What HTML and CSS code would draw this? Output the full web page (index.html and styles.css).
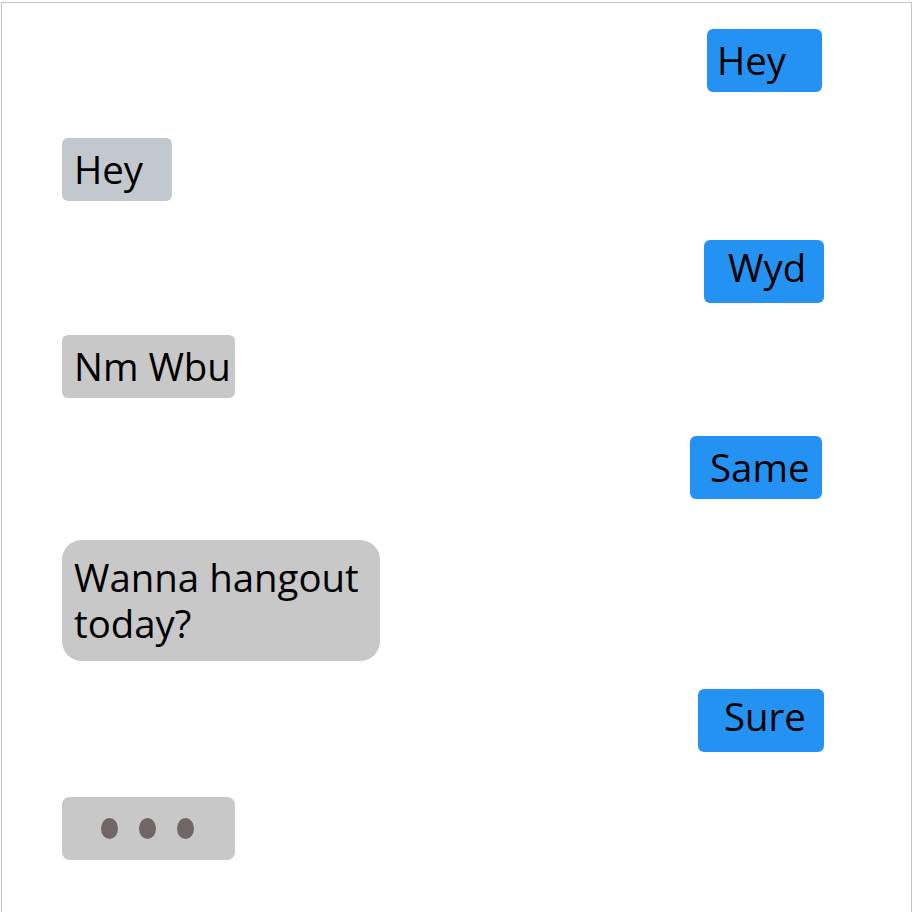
FILE: index.html
```html
<!DOCTYPE html>
<html lang="en">
<head>
<meta charset="utf-8">
<title>Chat</title>
<link rel="stylesheet" href="styles.css">
</head>
<body>
<div class="chat">
  <div class="msg out m1">Hey</div>
  <div class="msg in m2 tint">Hey</div>
  <div class="msg out m3">Wyd</div>
  <div class="msg in m4">Nm Wbu</div>
  <div class="msg out m5">Same</div>
  <div class="msg in m6 long">Wanna hangout today?</div>
  <div class="msg out m7">Sure</div>
  <div class="msg in m8 typing"><span class="dot"></span><span class="dot"></span><span class="dot"></span></div>
</div>
</body>
</html>
```
FILE: styles.css
```css
html, body {
  margin: 0;
  padding: 0;
  background: #ffffff;
}

.chat {
  box-sizing: border-box;
  width: 911px;
  min-height: 960px;
  margin: 2px 0 0 1px;
  border: 1px solid #c4c4c4;
  padding: 26px 0 40px;
  display: flex;
  flex-direction: column;
  align-items: flex-start;
  font-family: "Open Sans", "Noto Sans", sans-serif;
  font-size: 38.4px;
  line-height: 46px;
  color: #000;
}

.msg {
  box-sizing: border-box;
  height: 63px;
  padding: 8px 0 9px 11px;
  border-radius: 6px;
  white-space: nowrap;
}

.in {
  background: #c8c8c8;
  margin-left: 60px;
}

.in.tint {
  background: #c3c8ce;
}

.out {
  background: #2492f3;
  align-self: flex-end;
  margin-right: 89px;
}

.m1 { width: 115px; padding-left: 10px; }
.m2 { width: 110px; margin-top: 46px; padding-left: 12px; }
.m3 { width: 120px; margin-top: 39px; padding-top: 4px; padding-left: 24px; margin-right: 87px; }
.m4 { width: 173px; margin-top: 32px; padding-left: 12px; }
.m5 { width: 132px; margin-top: 38px; padding-left: 20px; }
.m6 { width: 318px; margin-top: 41px; }
.m7 { width: 126px; margin-top: 28px; padding-top: 4px; padding-left: 26px; margin-right: 87px; }
.m8 { width: 173px; margin-top: 45px; }

.long {
  height: 121px;
  padding: 14px 0 15px 12px;
  border-radius: 20px;
  white-space: normal;
}

.typing {
  display: flex;
  align-items: center;
  gap: 21px;
  padding: 0 0 0 39px;
  border-radius: 8px;
}

.dot {
  width: 17px;
  height: 21px;
  border-radius: 50%;
  background: #726565;
}
```
